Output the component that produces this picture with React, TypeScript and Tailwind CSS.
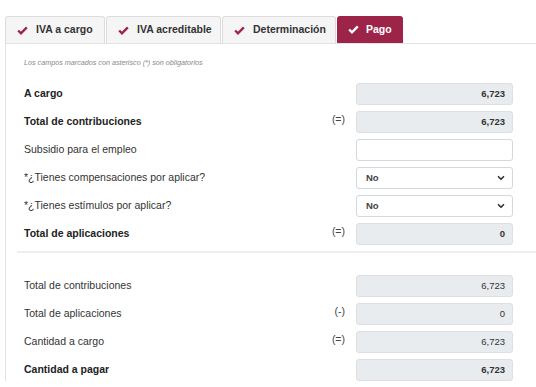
import { ChevronDown } from "lucide-react";

const tabs = [
  { label: "IVA a cargo", w: "w-[100px]" },
  { label: "IVA acreditable", w: "w-[115px]" },
  { label: "Determinación", w: "w-[114px]" },
];

type Row = {
  label: string;
  bold?: boolean;
  sign?: string;
  value?: string;
  valueBold?: boolean;
  kind: "readonly" | "input" | "select";
};

const first: Row[] = [
  { label: "A cargo", bold: true, value: "6,723", valueBold: true, kind: "readonly" },
  { label: "Total de contribuciones", bold: true, sign: "(=)", value: "6,723", valueBold: true, kind: "readonly" },
  { label: "Subsidio para el empleo", kind: "input" },
  { label: "*¿Tienes compensaciones por aplicar?", value: "No", kind: "select" },
  { label: "*¿Tienes estímulos por aplicar?", value: "No", kind: "select" },
  { label: "Total de aplicaciones", bold: true, sign: "(=)", value: "0", valueBold: true, kind: "readonly" },
];

const second: Row[] = [
  { label: "Total de contribuciones", value: "6,723", kind: "readonly" },
  { label: "Total de aplicaciones", sign: "(-)", value: "0", kind: "readonly" },
  { label: "Cantidad a cargo", sign: "(=)", value: "6,723", kind: "readonly" },
  { label: "Cantidad a pagar", bold: true, value: "6,723", valueBold: true, kind: "readonly" },
];

function CheckMark({ className }: { className?: string }) {
  return (
    <svg viewBox="0 0 12 10" className={className} fill="none">
      <path d="M1.2 5 L4.3 8.1 L10.8 1.5" stroke="currentColor" strokeWidth="2.6" strokeLinejoin="miter" />
    </svg>
  );
}

function Field({ row }: { row: Row }) {
  if (row.kind === "readonly") {
    return (
      <div className={`flex h-[22px] w-[157px] items-center justify-end rounded-[3px] border border-[#dcdfe3] bg-[#e9ecef] pr-[7px] text-[9.5px] text-[#333] ${row.valueBold ? "font-bold" : ""}`}>
        {row.value}
      </div>
    );
  }
  if (row.kind === "select") {
    return (
      <div className="flex h-[22px] w-[157px] items-center justify-between rounded-[3px] border border-[#d5d8dc] bg-white pl-[9px] pr-[6px] text-[9.5px] font-bold text-[#444]">
        <span>{row.value}</span>
        <ChevronDown className="h-[10px] w-[10px] text-[#333]" strokeWidth={4} />
      </div>
    );
  }
  return <div className="h-[22px] w-[157px] rounded-[3px] border border-[#d5d8dc] bg-white" />;
}

function FormRow({ row }: { row: Row }) {
  return (
    <div className="flex items-center">
      <span className={`flex-1 text-[10.5px] ${row.bold ? "font-bold text-[#222]" : "text-[#333]"}`}>{row.label}</span>
      <span className="mr-[11px] w-[20px] pb-[4px] text-right text-[10.5px] text-[#444]">{row.sign}</span>
      <Field row={row} />
    </div>
  );
}

export default function App() {
  return (
    <div className="h-[387px] w-[536px] overflow-hidden bg-white pl-[5px] pt-[16px] font-['Liberation_Sans',Arial,sans-serif]">
      <div className="flex h-[28px] border-b border-[#e3e3e3]">
        {tabs.map((t) => (
          <div key={t.label} className={`${t.w} mr-px flex items-center gap-[8px] rounded-t-[3px] border border-b-0 border-[#dcdcdc] bg-[#f5f5f5] pl-[11px] text-[10.5px] font-bold text-[#333]`}>
            <CheckMark className="h-[9px] w-[11px] text-[#9d2449]" />
            {t.label}
          </div>
        ))}
        <div className="flex w-[66px] items-center gap-[7px] rounded-t-[3px] bg-[#9d2449] pl-[11px] text-[10.5px] font-bold text-white">
          <CheckMark className="h-[9px] w-[11px]" />
          Pago
        </div>
      </div>
      <div className="border-l border-[#e3e3e3] pt-[14px]">
        <p className="pl-[18px] text-[7.2px] italic text-[#888]">Los campos marcados con asterisco (*) son obligatorios</p>
        <div className="mt-[14px] flex flex-col gap-[6px] pl-[18px] pr-[23px]">
          {first.map((r) => (
            <FormRow key={r.label} row={r} />
          ))}
        </div>
        <div className="ml-[11px] mt-[6px] h-[2px] bg-[#eeeeee]" />
        <div className="mt-[22px] flex flex-col gap-[6px] pl-[18px] pr-[23px]">
          {second.map((r) => (
            <FormRow key={r.label} row={r} />
          ))}
        </div>
      </div>
    </div>
  );
}
